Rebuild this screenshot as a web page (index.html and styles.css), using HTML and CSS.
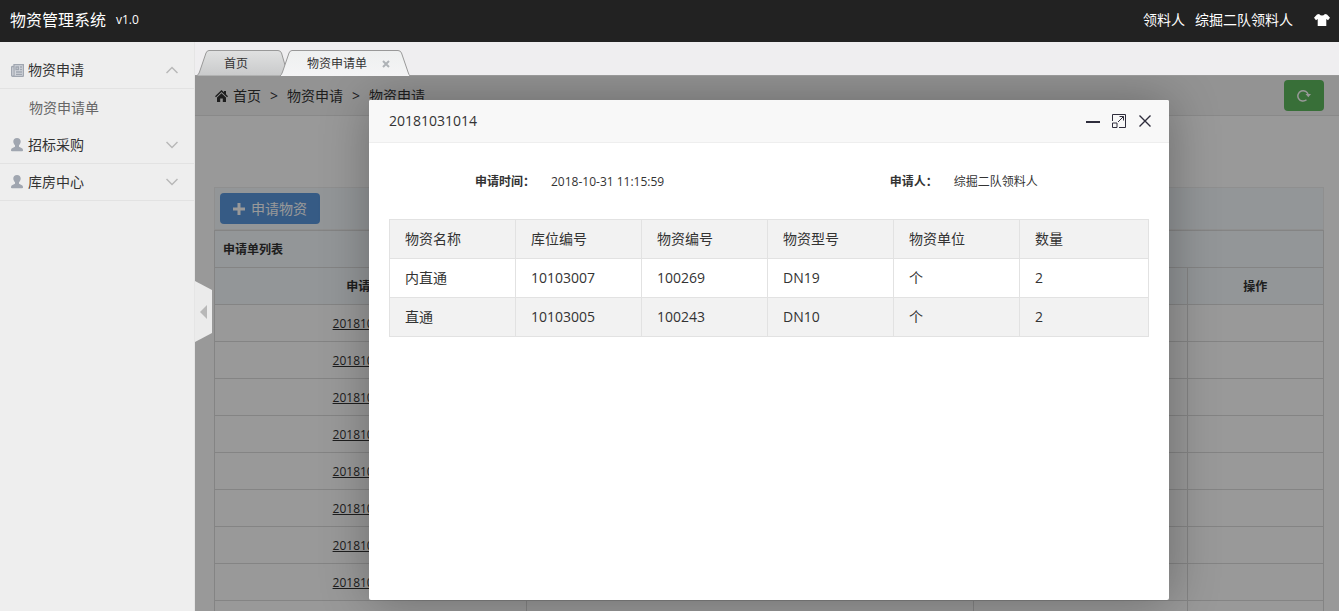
FILE: index.html
```html
<!DOCTYPE html>
<html lang="zh-CN">
  <head>
    <meta charset="UTF-8" />
    <meta name="viewport" content="width=device-width, initial-scale=1.0" />
    <title>物资管理系统 v1.0</title>
    <link rel="stylesheet" href="styles.css">
  </head>

  <body>
    <header class="navbar">
      <a class="logo" href="#">物资管理系统</a>
      <span class="version">v1.0</span>
      <div class="user-bar">
        <span>领料人</span>
        <a href="#">综掘二队领料人</a>
        <button class="skin" aria-label="换肤">
          <svg width="16" height="12" viewBox="0 0 16 12"><path fill="#fff" d="M5 0 Q8 3 11 0 L13 .5 L16 3.700 L14 6.300 L12.300 5.100 V12 H3.700 V5.100 L2 6.300 L0 3.700 L3 .5 Z" /></svg>
        </button>
      </div>
    </header>

    <div class="layout">
      <aside class="sidebar">
        <button class="menu-title">
          <svg class="menu-icon" width="13" height="13" viewBox="0 0 13 13">
            <path fill="#d3d6dc" stroke="#a0a6b0" stroke-width="1.300" d="M3 2.500 H1.500 Q.6 2.500 .6 3.500 V11 Q.6 12.400 2 12.400 H11.500 Q12.400 12.400 12.400 11.500 V.6 H3 V11 Q3 12.400 1.800 12.400" />
            <path fill="none" stroke="#a0a6b0" stroke-width="1.300" d="M5 3 H7.500 V5.500 H5 Z M9 3 H11 M9 5.500 H11 M5 8 H11 M5 10.300 H11" />
          </svg>
          <span>物资申请</span>
          <svg class="arrow" width="12" height="8" viewBox="0 0 12 8"><path d="M.5 7 L6 1.500 L11.500 7" /></svg>
        </button>
        <ul class="submenu">
          <li><a href="#">物资申请单</a></li>
        </ul>
        <button class="menu-title">
          <svg class="menu-icon" width="13" height="14" viewBox="0 0 13 14"><path fill="#a0a6b0" d="M6 0 C8.3 0 9.8 1.5 9.700 3.6 C9.6 5.2 9 6.4 8 7.2 V8.7 L10.5 10 Q12 10.6 12 12 V12.5 Q12 13.3 11 13.3 H1 Q0 13.3 0 12.5 V12 Q0 10.6 1.5 10 L4 8.7 V7.2 C3 6.4 2.400 5.2 2.300 3.6 C2.200 1.5 3.7 0 6 0 Z" /></svg>
          <span>招标采购</span>
          <svg class="arrow" width="12" height="8" viewBox="0 0 12 8"><path d="M.5 1 L6 6.500 L11.500 1" /></svg>
        </button>
        <button class="menu-title">
          <svg class="menu-icon" width="13" height="14" viewBox="0 0 13 14"><path fill="#a0a6b0" d="M6 0 C8.3 0 9.8 1.5 9.700 3.6 C9.6 5.2 9 6.4 8 7.2 V8.7 L10.5 10 Q12 10.6 12 12 V12.5 Q12 13.3 11 13.3 H1 Q0 13.3 0 12.5 V12 Q0 10.6 1.5 10 L4 8.7 V7.2 C3 6.4 2.400 5.2 2.300 3.6 C2.200 1.5 3.7 0 6 0 Z" /></svg>
          <span>库房中心</span>
          <svg class="arrow" width="12" height="8" viewBox="0 0 12 8"><path d="M.5 1 L6 6.500 L11.500 1" /></svg>
        </button>
      </aside>

      <div class="main">
        <button class="fold" aria-label="收起菜单">
          <svg width="7" height="14" viewBox="0 0 7 14"><path fill="#b8b8b8" d="M7 0 V14 L0 7 Z" /></svg>
        </button>

        <nav class="tabs">
          <a class="tab" href="#">
            <svg class="tab-shape" width="94" height="26" viewBox="0 0 94 26">
              <defs>
                <linearGradient id="tabOff" x1="0" y1="0" x2="0" y2="1"><stop offset="0" stop-color="#e0e1e1" /><stop offset="1" stop-color="#c9cacb" /></linearGradient>
              </defs>
              <path fill="url(#tabOff)" stroke="#999" d="M1 25.5 Q2.5 25 3.5 22 L10 3 Q11 .5 13 .5 H82 Q84.500 .5 85.500 3 L91 22 Q92 25 93 25.500" />
            </svg>
            <span>首页</span>
          </a>
          <a class="tab active" href="#">
            <svg class="tab-shape" width="132" height="26" viewBox="0 0 132 26">
              <defs>
                <linearGradient id="tabOn" x1="0" y1="0" x2="0" y2="1"><stop offset="0" stop-color="#eef0f0" /><stop offset="1" stop-color="#f4f4f5" /></linearGradient>
              </defs>
              <path fill="url(#tabOn)" stroke="#999" d="M1 26 Q2.5 25 3.500 22 L10 3 Q11 .5 13 .5 H119 Q121.500 .5 122.500 3 L129 22 Q130 25 131 26" />
            </svg>
            <span>物资申请单</span>
            <svg class="tab-close" width="8" height="8" viewBox="0 0 8 8"><path stroke="#aeb2b6" stroke-width="2" d="M1 1 L7 7 M7 1 L1 7" /></svg>
          </a>
        </nav>

        <section class="frame">
          <div class="breadcrumb">
            <svg width="13" height="12" viewBox="0 0 13 12"><path fill="#333" d="M6.500 0 L9 2.300 V1 H11 V4.200 L13 6.200 L12 7.200 L6.500 2 L1 7.200 L0 6.200 Z M6.500 3.200 L11 7.500 V12 H7.800 V8.500 H5.200 V12 H2 V7.500 Z" /></svg>
            <a href="#">首页</a>
            <span class="sep">&gt;</span>
            <span>物资申请</span>
            <span class="sep">&gt;</span>
            <span>物资申请</span>
            <button class="btn btn-success" aria-label="刷新">
              <svg width="14" height="13" viewBox="0 0 14 13"><path fill="none" stroke="#fff" stroke-width="1.500" d="M9.500 10.800 A5.200 5.200 0 1 1 11.200 6" /><path fill="#fff" d="M8.500 5 H14 L11.300 8.200 Z" /></svg>
            </button>
          </div>

          <div class="page">
            <div class="toolbar">
              <button class="btn btn-primary">
                <svg width="12" height="12" viewBox="0 0 12 12"><path fill="#fff" d="M4.500 0 H7.500 V4.500 H12 V7.500 H7.500 V12 H4.500 V7.500 H0 V4.500 H4.500 Z" /></svg>
                申请物资
              </button>
            </div>
            <table class="list">
              <colgroup>
                <col class="col-no" />
                <col class="col-time" />
                <col class="col-user" />
                <col class="col-action" />
              </colgroup>
              <thead>
                <tr><th class="list-title" colspan="4">申请单列表</th></tr>
                <tr><th>申请单号</th><th>申请时间</th><th>申请人</th><th>操作</th></tr>
              </thead>
              <tbody>
                <tr><td><a href="#">20181031014</a></td><td></td><td></td><td></td></tr>
                <tr><td><a href="#">20181031013</a></td><td></td><td></td><td></td></tr>
                <tr><td><a href="#">20181031012</a></td><td></td><td></td><td></td></tr>
                <tr><td><a href="#">20181031011</a></td><td></td><td></td><td></td></tr>
                <tr><td><a href="#">20181031010</a></td><td></td><td></td><td></td></tr>
                <tr><td><a href="#">20181031009</a></td><td></td><td></td><td></td></tr>
                <tr><td><a href="#">20181031008</a></td><td></td><td></td><td></td></tr>
                <tr><td><a href="#">20181031007</a></td><td></td><td></td><td></td></tr>
                <tr><td></td><td></td><td></td><td></td></tr>
              </tbody>
            </table>
          </div>

          <!-- 申请单详情弹层 -->
          <div class="shade">
            <div class="layer" role="dialog" aria-labelledby="layerTitle">
              <div class="layer-title">
                <span id="layerTitle">20181031014</span>
                <div class="layer-tools">
                  <button aria-label="最小化">
                    <svg width="14" height="14" viewBox="0 0 14 14"><path fill="#2e2d3c" d="M0 7 H14 V9 H0 Z" /></svg>
                  </button>
                  <button aria-label="最大化">
                    <svg width="14" height="14" viewBox="0 0 14 14"><path fill="none" stroke="#2e2d3c" d="M.5 7 V.5 H13.500 V13.500 H7 M.5 9 H5 V13.500 H.5 Z M6 8 L11.500 2.500 M7.500 2.500 H11.500 V6.500" /></svg>
                  </button>
                  <button aria-label="关闭">
                    <svg width="14" height="14" viewBox="0 0 14 14"><path fill="none" stroke="#2e2d3c" stroke-width="1.400" d="M1.500 1.500 L12.500 12.500 M12.500 1.500 L1.500 12.500" /></svg>
                  </button>
                </div>
              </div>
              <div class="layer-body">
                <dl class="info">
                  <dt>申请时间：</dt>
                  <dd>2018-10-31 11:15:59</dd>
                  <dt>申请人：</dt>
                  <dd>综掘二队领料人</dd>
                </dl>
                <table class="detail">
                  <thead>
                    <tr><th>物资名称</th><th>库位编号</th><th>物资编号</th><th>物资型号</th><th>物资单位</th><th class="count">数量</th></tr>
                  </thead>
                  <tbody>
                    <tr><td>内直通</td><td>10103007</td><td>100269</td><td>DN19</td><td>个</td><td>2</td></tr>
                    <tr><td>直通</td><td>10103005</td><td>100243</td><td>DN10</td><td>个</td><td>2</td></tr>
                  </tbody>
                </table>
              </div>
            </div>
          </div>
        </section>
      </div>
    </div>
  </body>
</html>
```
FILE: styles.css
```css
* {
  box-sizing: border-box;
}

body {
  margin: 0;
  height: 100vh;
  display: flex;
  flex-direction: column;
  overflow: hidden;
  font-family: "Open Sans", "Noto Sans CJK SC", sans-serif;
  font-size: 14px;
  line-height: 20px;
  color: #333;
  background-color: #fff;
}

a {
  color: inherit;
  text-decoration: none;
}

button {
  font: inherit;
  color: inherit;
  background: none;
  border: none;
  padding: 0;
  cursor: pointer;
}

svg {
  display: block;
  flex: none;
}

ul,
dl,
dd {
  margin: 0;
  padding: 0;
  list-style: none;
}

/* header */
.navbar {
  display: flex;
  align-items: center;
  flex: none;
  height: 42px;
  padding: 0 9px 2px 10px;
  color: #fff;
  background-color: #222;
}

.logo {
  font-size: 16px;
}

.version {
  margin-left: 10px;
  font-size: 12px;
}

.user-bar {
  display: flex;
  align-items: center;
  gap: 10px;
  margin-left: auto;
}

.skin {
  margin-left: 11px;
}

.layout {
  display: flex;
  flex: 1;
  min-height: 0;
}

/* left menu */
.sidebar {
  flex: none;
  width: 195px;
  padding-top: 10px;
  background-color: #eee;
  border-right: 1px solid #e5e5e5;
}

.menu-title {
  display: flex;
  align-items: center;
  width: 100%;
  height: 37px;
  padding: 0 16px 0 11px;
  border-bottom: 1px solid #e2e2e2;
}

.menu-title span {
  margin-left: 4px;
}

.arrow {
  margin-left: auto;
  fill: none;
  stroke: #b8b8b8;
  stroke-width: 1.5;
}

.submenu a {
  display: block;
  padding: 9px 0 9px 29px;
  color: #666;
}

/* right side */
.main {
  position: relative;
  display: flex;
  flex-direction: column;
  flex: 1;
  min-width: 0;
}

.fold {
  position: absolute;
  z-index: 3;
  left: 0;
  top: 239px;
  width: 17px;
  height: 61px;
  padding-left: 5px;
  background-color: #ebebeb;
  clip-path: polygon(0 0, 100% 9px, 100% 52px, 0 100%);
}

.tabs {
  display: flex;
  align-items: flex-end;
  flex: none;
  height: 34px;
  padding-left: 1px;
  background: linear-gradient(#999, #999) bottom / 100% 1px no-repeat #efeef0;
}

.tab {
  position: relative;
  display: flex;
  align-items: center;
  width: 94px;
  height: 26px;
  padding: 2px 0 0 28px;
  font-size: 12px;
}

.tab.active {
  width: 132px;
  margin-left: -11px;
}

.tab-shape {
  position: absolute;
  left: 0;
  top: 0;
}

.tab span {
  position: relative;
}

.tab-close {
  position: relative;
  margin-left: 15px;
}

.frame {
  position: relative;
  flex: 1;
  min-height: 0;
  overflow: hidden;
  background-color: #fff;
}

.breadcrumb {
  display: flex;
  align-items: center;
  height: 40px;
  padding: 0 15px 0 20px;
  background-color: #f5f5f5;
  border-bottom: 1px solid #e5e5e5;
}

.breadcrumb a {
  margin-left: 5px;
}

.sep {
  margin: 0 9px;
}

.btn {
  display: flex;
  align-items: center;
  justify-content: center;
  height: 31px;
  color: #fff;
  border-radius: 4px;
}

.btn-success {
  width: 40px;
  margin-left: auto;
  background-color: #5eb95e;
}

.btn-primary {
  gap: 6px;
  width: 100px;
  background-color: #5a98de;
}

.page {
  padding: 71px 15px 0 19px;
}

.toolbar {
  padding: 5px;
  background-color: #f5fafe;
  border: 1px solid #eee;
}

.list {
  width: 100%;
  table-layout: fixed;
  border-collapse: collapse;
  font-size: 12px;
  text-align: center;
}

.list th,
.list td {
  height: 37px;
  padding: 9px 8px 7px;
  border: 1px solid #ddd;
}

.list th {
  background-color: #f5fafe;
}

.list .list-title {
  text-align: left;
}

.list a {
  text-decoration: underline;
}

.col-no {
  width: 28.1%;
}

.col-time {
  width: 40.3%;
}

.col-user {
  width: 19.3%;
}

.col-action {
  width: 12.3%;
}

/* dialog */
.shade {
  position: absolute;
  inset: 0;
  display: flex;
  justify-content: center;
  align-items: flex-start;
  padding: 24px 0 0 4px;
  background-color: rgba(0, 0, 0, 0.4);
}

.layer {
  width: 800px;
  max-width: 100%;
  min-height: 500px;
  background-color: #fff;
  border-radius: 2px;
  box-shadow: 1px 1px 50px rgba(0, 0, 0, 0.3);
}

.layer-title {
  display: flex;
  align-items: center;
  justify-content: space-between;
  height: 43px;
  padding: 0 17px 0 20px;
  background-color: #f8f8f8;
  border-bottom: 1px solid #eee;
  border-radius: 2px 2px 0 0;
}

.layer-tools {
  display: flex;
  gap: 12px;
}

.layer-body {
  padding: 29px 20px 20px;
}

.info {
  display: grid;
  grid-template-columns: 20% 35% 18% 27%;
  font-size: 12px;
}

.info dt {
  padding-right: 6px;
  font-weight: bold;
  text-align: right;
}

.info dd {
  padding-left: 10px;
}

.detail {
  width: 100%;
  margin-top: 27px;
  table-layout: fixed;
  border-collapse: collapse;
}

.detail th,
.detail td {
  height: 39px;
  padding: 9px 15px;
  font-weight: normal;
  text-align: left;
  border: 1px solid #e2e2e2;
}

.detail .count {
  width: 129px;
}

.detail thead tr,
.detail tbody tr:nth-child(even) {
  background-color: #f2f2f2;
}
```
